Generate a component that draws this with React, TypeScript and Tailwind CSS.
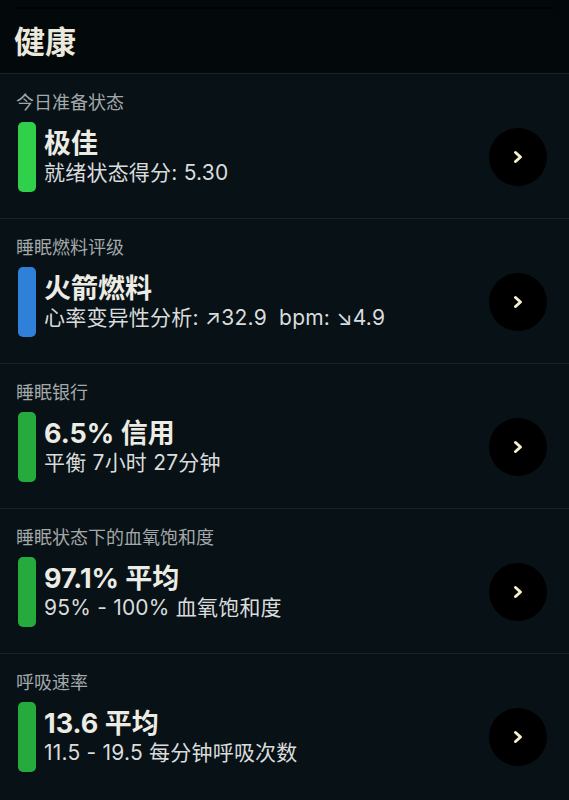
const rows = [
  { label: "今日准备状态", title: "极佳", sub: "就绪状态得分: 5.30", bar: "bg-[#31d04a]" },
  { label: "睡眠燃料评级", title: "火箭燃料", sub: "心率变异性分析: ↗32.9  bpm: ↘4.9", bar: "bg-[#2f80d8]" },
  { label: "睡眠银行", title: "6.5% 信用", sub: "平衡 7小时 27分钟", bar: "bg-[#25ab3c]" },
  { label: "睡眠状态下的血氧饱和度", title: "97.1% 平均", sub: "95% - 100% 血氧饱和度", bar: "bg-[#25ab3c]" },
  { label: "呼吸速率", title: "13.6 平均", sub: "11.5 - 19.5 每分钟呼吸次数", bar: "bg-[#25ab3c]" },
]

function Chevron() {
  return (
    <svg width="12" height="14" viewBox="0 0 12 14" fill="none">
      <path d="M3.5 2.5 L8.5 7 L3.5 11.5" stroke="#f6f0cc" strokeWidth="3" strokeLinecap="round" strokeLinejoin="round" />
    </svg>
  )
}

export default function App() {
  return (
    <div
      className="w-[569px] h-[800px] overflow-hidden bg-[#071116]"
      style={{ fontFamily: 'Inter, "Noto Sans CJK SC", sans-serif' }}
    >
      <div className="bg-[#03080b] h-[73px] pt-[7px]">
        <div className="mx-[13px] h-[2px] bg-[#010305]" />
        <h1 className="pl-[14px] pt-[14px] text-[31px] leading-[38px] font-bold text-[#ebe8dc]">健康</h1>
      </div>
      {rows.map((r) => (
        <div key={r.label} className="border-t border-[#1a2327] h-[145px] pt-[18px] pl-[16px] pr-[22px]">
          <div className="text-[18px] leading-[22px] text-[#a4a8aa]">{r.label}</div>
          <div className="mt-[8px] flex items-center">
            <div className={`w-[18px] h-[70px] rounded-[5px] ml-[2px] ${r.bar}`} />
            <div className="ml-[8px] flex-1">
              <div className="text-[27px] leading-[32px] font-bold text-[#ecebe4]">{r.title}</div>
              <div className="text-[21px] leading-[26px] text-[#dadcdc] whitespace-pre tracking-[0.01em]">{r.sub}</div>
            </div>
            <button className="w-[58px] h-[58px] rounded-full bg-black flex items-center justify-center">
              <Chevron />
            </button>
          </div>
        </div>
      ))}
    </div>
  )
}
